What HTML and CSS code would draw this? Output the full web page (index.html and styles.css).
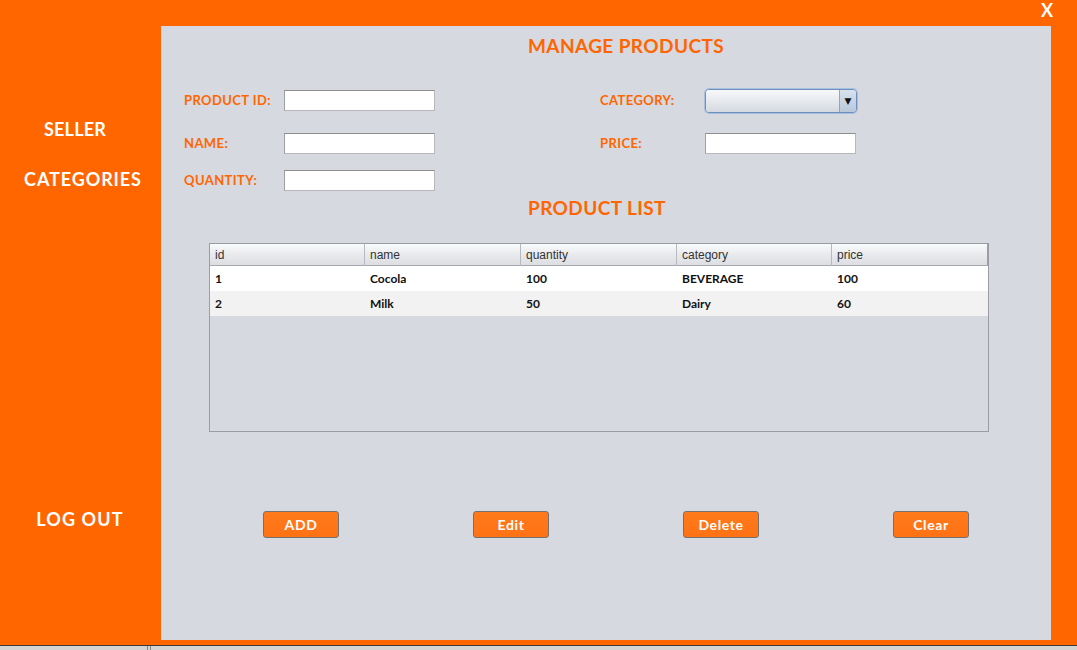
FILE: index.html
```html
<!DOCTYPE html>
<html>
<head>
<meta charset="utf-8">
<link rel="stylesheet" href="styles.css">
</head>
<body>
<div class="app">
  <div class="titlebar"><span class="close">X</span></div>
  <div class="main">
    <nav class="sidebar">
      <a class="nav seller">SELLER</a>
      <a class="nav categories">CATEGORIES</a>
      <a class="nav logout">LOG OUT</a>
    </nav>
    <section class="panel">
      <h1 class="heading">MANAGE PRODUCTS</h1>
      <div class="form">
        <label class="lbl">PRODUCT ID:</label>
        <input class="field" type="text">
        <label class="lbl">CATEGORY:</label>
        <div class="combo"><span class="combo-box"></span><span class="combo-btn">&#9660;</span></div>
        <label class="lbl">NAME:</label>
        <input class="field" type="text">
        <label class="lbl">PRICE:</label>
        <input class="field" type="text">
        <label class="lbl">QUANTITY:</label>
        <input class="field" type="text">
      </div>
      <h2 class="heading list-title">PRODUCT LIST</h2>
      <div class="table">
        <div class="thead">
          <div class="th">id</div><div class="th">name</div><div class="th">quantity</div><div class="th">category</div><div class="th last">price</div>
        </div>
        <div class="tr">
          <div class="td">1</div><div class="td">Cocola</div><div class="td">100</div><div class="td">BEVERAGE</div><div class="td">100</div>
        </div>
        <div class="tr alt">
          <div class="td">2</div><div class="td">Milk</div><div class="td">50</div><div class="td">Dairy</div><div class="td">60</div>
        </div>
      </div>
      <div class="actions">
        <button class="btn">ADD</button>
        <button class="btn">Edit</button>
        <button class="btn">Delete</button>
        <button class="btn">Clear</button>
      </div>
    </section>
  </div>
  <div class="statusbar"><span class="status-sep"></span></div>
</div>
</body>
</html>
```

FILE: styles.css
```css
* { box-sizing: border-box; }
html, body { margin: 0; padding: 0; }
body {
  width: 1077px;
  height: 650px;
  overflow: hidden;
  font-family: "Lato", "DejaVu Sans", sans-serif;
}
.app {
  width: 1077px;
  height: 650px;
  background: #ff6600;
  display: flex;
  flex-direction: column;
}
.titlebar {
  height: 26px;
  display: flex;
  justify-content: flex-end;
  align-items: flex-start;
  padding-right: 24px;
}
.close {
  color: #fff;
  font-weight: 700;
  font-size: 18px;
  line-height: 18px;
  margin-top: 1px;
}
.main {
  height: 614px;
  display: flex;
}
.sidebar {
  width: 161px;
  display: flex;
  flex-direction: column;
  align-items: center;
  padding-top: 92px;
}
.nav {
  color: #fff;
  font-weight: 700;
  font-size: 18px;
  line-height: 22px;
  letter-spacing: 0.9px;
}
.seller { margin-right: 11px; letter-spacing: 0.2px; }
.categories { margin-top: 28px; margin-left: 5px; }
.logout { margin-top: 318px; margin-left: -1px; letter-spacing: 1.1px; }
.panel {
  width: 890px;
  height: 614px;
  background: #d6d9e0;
  padding-top: 9px;
}
.heading {
  margin: 0 0 0 367px;
  color: #ff6600;
  font-size: 19px;
  line-height: 22px;
  font-weight: 700;
  letter-spacing: 0.4px;
}
.form {
  margin: 33px 0 0 23px;
  display: grid;
  grid-template-columns: 100px 316px 105px 151px;
  grid-template-rows: 43px 37px 21px;
  align-items: start;
}
.lbl {
  color: #ff6600;
  font-weight: 700;
  font-size: 13px;
  line-height: 21px;
  letter-spacing: 0.4px;
}
.field {
  width: 151px;
  height: 21px;
  margin: 0;
  padding: 0;
  background: #fff;
  border: 1px solid #b8b8b8;
  border-top-color: #8e8e8e;
  border-left-color: #a0a0a0;
  outline: none;
}
.combo {
  width: 152px;
  height: 24px;
  margin-top: -1px;
  display: flex;
  border: 1px solid #6d8fbf;
  border-radius: 4px;
  box-shadow: 0 0 0 1px #a9c1e0;
  overflow: hidden;
}
.combo-box {
  flex: 1;
  background: linear-gradient(#f7f8fa, #e3e6eb 60%, #d5d9e0);
}
.combo-btn {
  width: 17px;
  border-left: 1px solid #8ea6c5;
  background: linear-gradient(#d8e1ec, #b9c8da);
  color: #111;
  font-size: 9px;
  line-height: 22px;
  text-align: center;
}
.list-title {
  margin-top: 6px;
}
.table {
  margin: 24px 0 0 48px;
  width: 780px;
  height: 189px;
  border: 1px solid #9a9da4;
}
.thead, .tr {
  display: grid;
  grid-template-columns: 155px 156px 156px 155px 156px;
}
.thead {
  height: 22px;
  background: linear-gradient(#fafbfc, #e9eaed 50%, #dcdee2);
  border-bottom: 1px solid #a5a8ae;
}
.th {
  font-family: "Liberation Sans", Arial, sans-serif;
  font-size: 12px;
  line-height: 21px;
  padding-top: 1px;
  color: #333;
  padding-left: 5px;
  border-right: 1px solid #b6b9bf;
}
.th.last { border-right: 1px solid #9a9da4; }
.tr {
  height: 25px;
  background: #fff;
}
.tr.alt { background: #f2f2f2; }
.td {
  font-size: 12px;
  font-weight: 700;
  line-height: 25px;
  color: #111;
  padding-left: 5px;
}
.actions {
  margin: 79px 0 0 102px;
  display: flex;
  gap: 134px;
}
.btn {
  width: 76px;
  height: 27px;
  padding: 0;
  border: 1px solid #75716e;
  border-radius: 3px;
  background: linear-gradient(#ff7a1c, #ff7214);
  color: #fff;
  font-family: "Lato", "DejaVu Sans", sans-serif;
  font-weight: 700;
  font-size: 14px;
  letter-spacing: 0.6px;
}
.statusbar {
  margin-top: 5px;
  height: 5px;
  border-top: 1px solid #3c3c3c;
  background: #d4d4d4;
}
.status-sep {
  display: block;
  margin-left: 147px;
  width: 4px;
  height: 4px;
  border-left: 1px solid #888;
  border-right: 1px solid #888;
}
```
